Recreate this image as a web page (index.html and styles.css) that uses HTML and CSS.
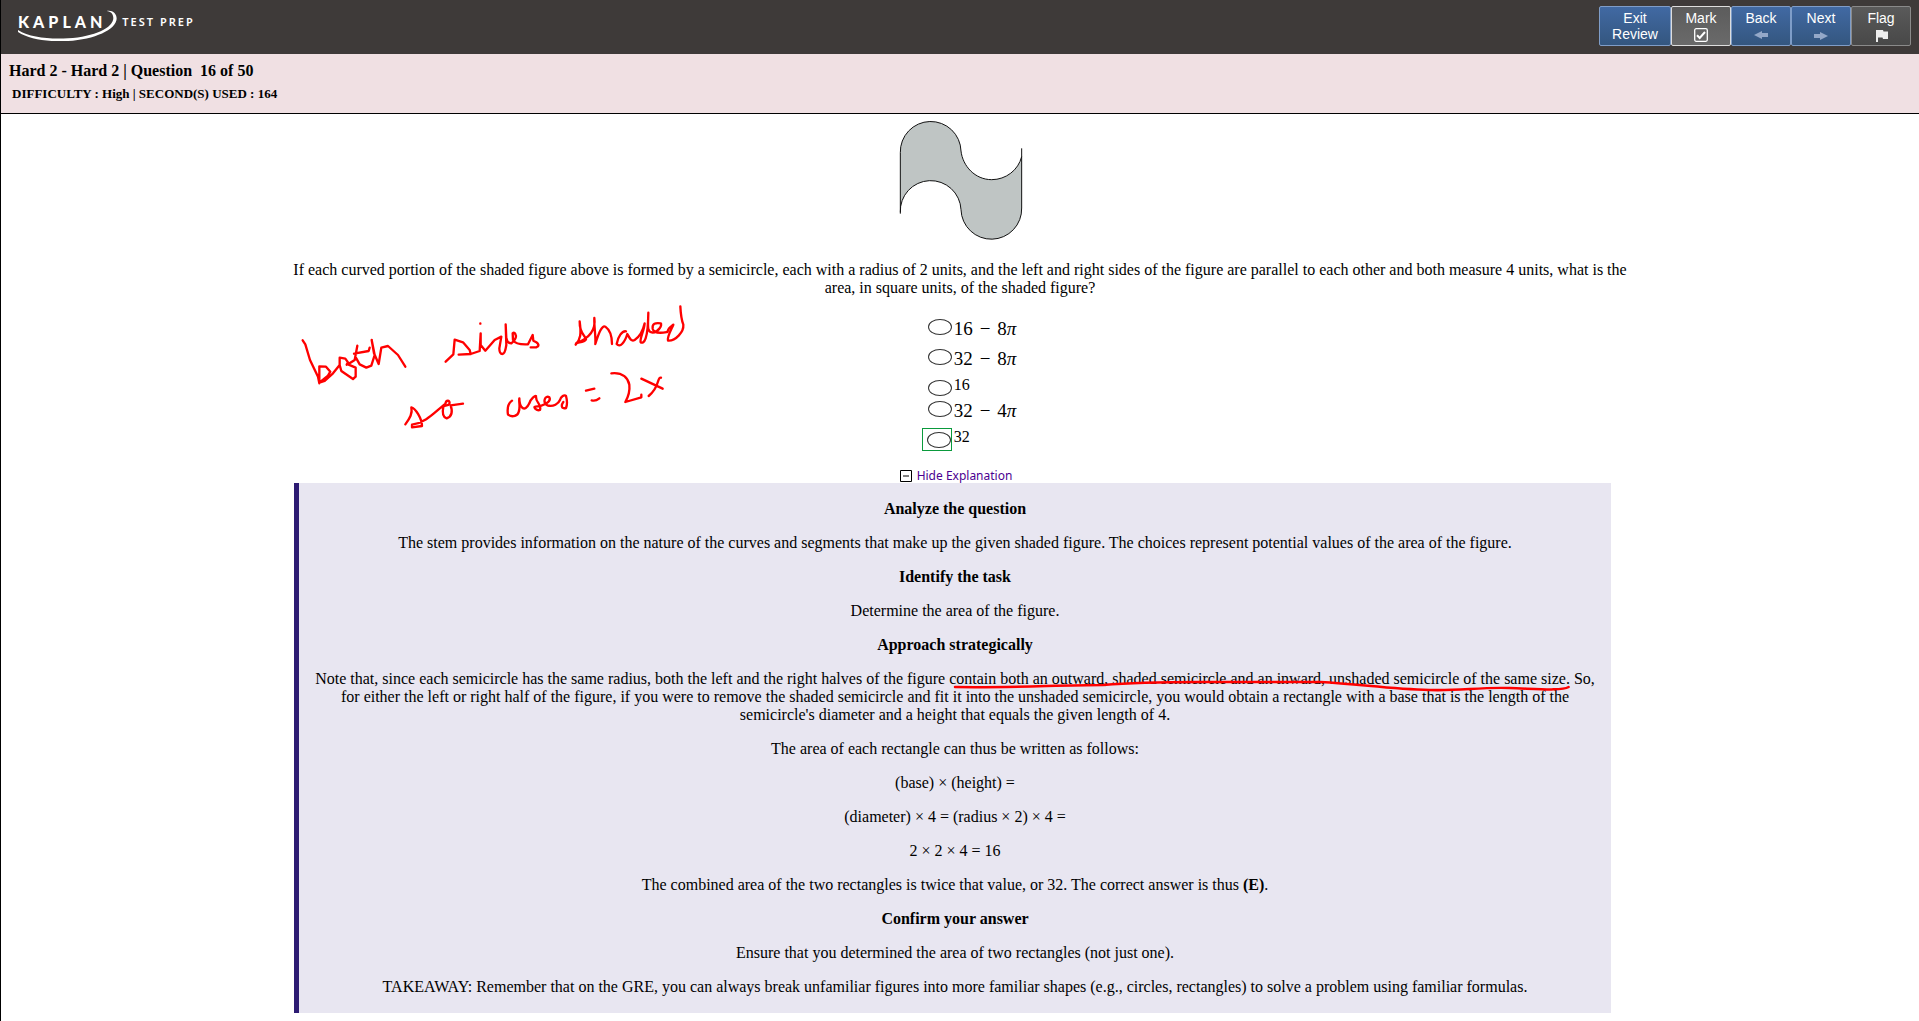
FILE: index.html
```html
<!DOCTYPE html>
<html lang="en">
<head>
<meta charset="utf-8">
<title>Kaplan Test Prep - Review</title>
<link rel="stylesheet" href="styles.css">
</head>
<body>
<header class="topbar">
  <div class="brand">
    <span class="brand-name">KAPLAN</span>
    <span class="brand-sub">TEST PREP</span>
    <svg class="brand-swoosh" width="100" height="32" viewBox="0 0 300 96" aria-hidden="true">
      <path d="M0 63C35 85 90 91 150 88C230 83 286 56 286 27C286 14 278 8 266 6C284 3 296 14 296 29C294 62 230 91 150 96C90 99 35 92 0 69Z" fill="#fff"/>
    </svg>
  </div>
  <nav class="actions">
    <button class="btn btn-blue btn-exit" type="button">Exit Review</button>
    <button class="btn btn-mark" type="button">Mark
      <svg width="14" height="14" viewBox="0 0 14 14" aria-hidden="true"><rect x=".7" y=".7" width="12.6" height="12.6" rx="1.5" fill="none" stroke="#fff" stroke-width="1.3"/><path d="M3 7.3L5.7 10L11 4" fill="none" stroke="#fff" stroke-width="2"/></svg>
    </button>
    <button class="btn btn-blue" type="button">Back
      <svg width="14" height="14" viewBox="0 0 14 14" aria-hidden="true"><path d="M0 7L8 3V5H14V9H8V11Z" fill="#94a8c8"/></svg>
    </button>
    <button class="btn btn-blue" type="button">Next
      <svg width="14" height="14" viewBox="0 0 14 14" aria-hidden="true"><path d="M14 8L6 4V6H0V10H6V12Z" fill="#94a8c8"/></svg>
    </button>
    <button class="btn btn-flag" type="button">Flag
      <svg width="14" height="14" viewBox="0 0 14 14" aria-hidden="true"><path d="M2 2H9L9.500 3.500H14V11H9L8.500 9.500H4V14H2Z" fill="#eee"/></svg>
    </button>
  </nav>
</header>

<section class="status">
  <h1 class="status-title">Hard 2 - Hard 2 | Question &nbsp;16 of 50</h1>
  <p class="status-meta">DIFFICULTY : High | SECOND(S) USED : 164</p>
</section>

<main class="question">
  <svg class="figure" width="124" height="119" viewBox="57 33 372 357" role="img" aria-label="Shaded figure">
    <path d="M61 311V128A91 91 0 0 1 243 123C248 168 285 209 335 209C378 209 415 180 425 140V294A91 91 0 0 1 243 299A91 91 0 0 0 61 307Z" fill="#bfc5c4"/>
    <path d="M61 311V128A91 91 0 0 1 243 123C248 168 285 209 335 209C378 209 415 180 425 140M425 115V294A91 91 0 0 1 243 299A91 91 0 0 0 61 307" fill="none" stroke="#111" stroke-width="3"/>
  </svg>
  <p class="stem">If each curved portion of the shaded figure above is formed by a semicircle, each with a radius of 2 units, and the left and right sides of the figure are parallel to each other and both measure 4 units, what is the area, in square units, of the shaded figure?</p>

  <div class="choices" role="radiogroup" aria-label="Answer choices">
    <label class="choice choice-math"><span class="mark"><input type="radio" name="answer"></span><span class="math"><span>16</span><span>−</span><span>8<i>π</i></span></span></label>
    <label class="choice choice-math"><span class="mark"><input type="radio" name="answer"></span><span class="math"><span>32</span><span>−</span><span>8<i>π</i></span></span></label>
    <label class="choice"><span class="mark"><input type="radio" name="answer"></span><span>16</span></label>
    <label class="choice choice-math"><span class="mark"><input type="radio" name="answer"></span><span class="math"><span>32</span><span>−</span><span>4<i>π</i></span></span></label>
    <label class="choice"><span class="mark mark-correct"><input type="radio" name="answer"></span><span>32</span></label>
  </div>

  <svg class="note" width="420" height="150" viewBox="0 0 1260 450" role="img" aria-label="both sides shaded so area = 2x">
    <g fill="none" stroke="#f00" stroke-width="7" stroke-linecap="round" stroke-linejoin="round">
      <path d="M38 151L46 163L60 210L84 260L88 280V229L108 230L121 245L114 257L88 278L104 273L129 250L149 225V203L166 206L174 217L170 224M149 225L154 243L189 267L197 260V233L174 223L194 210L202 167M199 205L209 223L229 233L244 227L254 195L245 150L252 190L266 222L274 173L294 168L324 195L346 230M192 191L236 183L239 173"/>
      <path d="M467 215L490 193L494 149L519 157L539 180L542 192L506 194M542 192L569 183L572 130V165L586 182L614 150L634 140L628 175Q628 192 637 192Q645 192 649 165L647 103L649 145Q652 160 664 160Q678 148 678 138Q674 124 668 130L669 150Q678 165 714 163L728 135L730 152L739 157Q748 163 744 169L739 172H722M571 100V101"/>
      <path d="M857 164C872 148 874 132 869 94C868 132 886 136 888 148C882 158 866 156 858 160C900 144 918 118 913 84C912 112 918 142 916 162C926 130 936 104 946 110C960 120 966 142 966 162M1008 124C996 122 984 140 980 162C990 174 1004 158 1012 132C1018 142 1022 156 1034 150C1050 140 1058 126 1064 100C1062 124 1048 148 1052 157C1062 162 1074 150 1075 68C1074 110 1070 126 1088 128C1106 126 1118 104 1112 100C1096 98 1086 100 1088 116C1092 134 1120 128 1132 126C1136 110 1146 108 1150 104C1144 118 1130 142 1134 152C1156 154 1182 126 1180 104C1174 88 1172 70 1171 49"/>
      <path d="M346 403C360 384 368 370 364 352C376 354 396 386 396 408L366 412V404C410 398 438 362 466 342C468 328 482 330 478 342C474 348 462 346 460 350C456 370 460 382 470 385C490 378 486 358 482 346L519 341"/>
      <path d="M666 332C652 342 652 362 654 374C668 384 684 376 686 366C692 350 686 338 688 325C688 352 704 370 718 340C722 326 736 316 738 318C736 340 756 340 750 360C740 364 728 350 736 350C756 350 786 336 778 322C766 314 756 336 772 346C790 352 806 340 810 330C812 320 824 312 828 318C832 332 832 344 828 354C812 358 814 344 820 336M888 302L913 296M905 331C914 334 922 330 928 325"/>
      <path d="M964 250C1000 246 1014 266 1018 284C1020 302 1014 322 1006 336L1054 322V314M1054 266L1118 296M1113 263C1100 260 1112 288 1076 318"/>
    </g>
  </svg>

  <a class="toggle" href="#explanation">
    <svg width="12" height="12" viewBox="0 0 12 12" aria-hidden="true"><path d="M.5 .5H11.500V11.500H.5ZM3 6H9" fill="none" stroke="#000"/></svg>
    Hide Explanation
  </a>

  <article class="explanation" id="explanation">
    <h2>Analyze the question</h2>
    <p>The stem provides information on the nature of the curves and segments that make up the given shaded figure. The choices represent potential values of the area of the figure.</p>
    <h2>Identify the task</h2>
    <p>Determine the area of the figure.</p>
    <h2>Approach strategically</h2>
    <p>Note that, since each semicircle has the same radius, both the left and the right halves of the figure <span class="underlined">contain both an outward, shaded semicircle and an inward, unshaded semicircle of the same size.<svg class="pen" height="14" viewBox="0 0 620 14" preserveAspectRatio="none" aria-hidden="true"><path d="M6 7C60 8 110 5 154 5C200 1 240 2 280 2H371C410 4 440 9 480 10C510 11 530 7 560 8C590 9 612 11 619 7" fill="none" stroke="#f00" stroke-width="2.500" stroke-linecap="round"/></svg></span> So, for either the left or right half of the figure, if you were to remove the shaded semicircle and fit it into the unshaded semicircle, you would obtain a rectangle with a base that is the length of the semicircle's diameter and a height that equals the given length of 4.</p>
    <p>The area of each rectangle can thus be written as follows:</p>
    <p>(base) × (height) =</p>
    <p>(diameter) × 4 = (radius × 2) × 4 =</p>
    <p>2 × 2 × 4 = 16</p>
    <p>The combined area of the two rectangles is twice that value, or 32. The correct answer is thus <b>(E)</b>.</p>
    <h2>Confirm your answer</h2>
    <p>Ensure that you determined the area of two rectangles (not just one).</p>
    <p>TAKEAWAY: Remember that on the GRE, you can always break unfamiliar figures into more familiar shapes (e.g., circles, rectangles) to solve a problem using familiar formulas.</p>
  </article>
</main>
</body>
</html>
```
FILE: styles.css
```css
* { box-sizing: border-box; }

body {
  margin: 0;
  min-height: 100vh;
  border-left: 1px solid #000;
  background: #fff;
  color: #000;
  font: 16px/18px "Liberation Serif", "Times New Roman", serif;
}

.topbar {
  display: flex;
  justify-content: space-between;
  align-items: flex-start;
  height: 54px;
  padding: 6px 8px 0 17px;
  background: #3e3a39;
  color: #fff;
}

.brand {
  position: relative;
  display: flex;
  align-items: center;
  gap: 16px;
  height: 32px;
}

.brand-name {
  font: 900 16px/18px Lato, sans-serif;
  letter-spacing: 4px;
}

.brand-sub {
  font: 600 11px/16px "Noto Sans", sans-serif;
  letter-spacing: 2px;
}

.brand-swoosh {
  position: absolute;
  left: 0;
  top: 3px;
}

.actions { display: flex; }

.btn {
  display: flex;
  flex-direction: column;
  align-items: center;
  justify-content: flex-start;
  width: 60px;
  height: 40px;
  margin: 0;
  padding: 3px 4px 0;
  border: 1px solid #8a8a8a;
  border-radius: 2px;
  background: linear-gradient(#5a5a5a, #484848);
  color: #fff;
  font: 14px/16px "Liberation Sans", Arial, sans-serif;
  text-align: center;
}

.btn svg { margin-top: 2px; }

.btn-blue {
  border-color: #7f9dc8;
  background: linear-gradient(#4169a3, #34567f);
}

.btn-exit {
  width: 72px;
  padding: 3px 10px 0;
}

.btn-mark {
  border-color: #ddd;
  background: linear-gradient(#5c5c5c, #6a6a6a);
}

.status {
  height: 60px;
  padding: 8px 8px 0;
  border-bottom: 1px solid #000;
  background: #f0e0e3;
}

.status-title {
  margin: 0;
  font-size: 16px;
  line-height: 18px;
}

.status-meta {
  margin: 6px 0 0 3px;
  font-size: 13px;
  font-weight: bold;
  line-height: 16px;
}

.question {
  position: relative;
  display: flex;
  flex-direction: column;
  align-items: center;
  width: 70%;
  margin: 0 auto;
  padding: 7px 0 8px;
  text-align: center;
}

.figure {
  display: block;
  margin-left: 2px;
}

.stem { margin: 21px 0 17px; }

.choices {
  display: flex;
  flex-direction: column;
  margin-left: 18px;
}

.choice {
  display: flex;
  align-items: center;
  gap: 2px;
  height: 22px;
}

.choice-math { height: 30px; }

.mark {
  display: flex;
  justify-content: flex-end;
  width: 30px;
  padding: 6px 0 0;
}

.choice-math .mark { padding: 0 0 4px; }

.mark-correct {
  height: 23px;
  margin-top: 5px;
  padding: 3px 0 0;
  border: 1px solid #0a9a3c;
}

.mark input {
  appearance: none;
  width: 24px;
  height: 16px;
  margin: 0;
  border: 1px solid #333;
  border-radius: 50%;
  background: #fff;
}

.math {
  display: flex;
  gap: 7px;
  font-size: 19px;
}

.note {
  position: absolute;
  left: 1px;
  top: 176px;
}

.toggle {
  display: flex;
  align-items: center;
  gap: 5px;
  margin-top: 20px;
  margin-right: 8px;
  color: #4b0091;
  font: 12px/15px "Noto Sans", sans-serif;
  text-decoration: none;
}

.explanation {
  align-self: stretch;
  margin: 0 20px 0 5px;
  padding: 17px 16px;
  border-left: 5px solid #2d1b73;
  background: #e8e6f1;
}

.explanation h2,
.explanation p {
  margin: 0 0 16px;
  font-size: 16px;
}

.explanation p:last-child { margin-bottom: 0; }

.underlined { position: relative; }

.pen {
  position: absolute;
  left: 0;
  bottom: -7px;
  width: 100%;
}
```
